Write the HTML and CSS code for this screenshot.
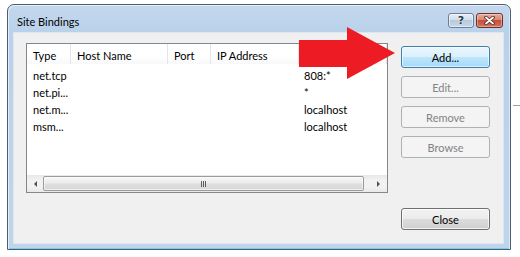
FILE: index.html
```html
<!DOCTYPE html>
<html lang="en">
<head>
    <meta charset="UTF-8">
    <title>Site Bindings</title>
    <link rel="stylesheet" href="styles.css">
</head>
<body>
    <div class="desk-line"></div>

    <div class="window">
        <div class="titlebar">
            <span class="title">Site Bindings</span>
            <div class="caption-buttons">
                <span class="cap-btn help">?</span>
                <span class="cap-btn close">
                    <svg width="11" height="9" viewBox="0 0 11 9">
                        <path d="M2 1.5 L9 7.5 M9 1.5 L2 7.5" stroke="#5a2a22" stroke-width="3.6" stroke-linecap="round"/>
                        <path d="M2 1.5 L9 7.5 M9 1.5 L2 7.5" stroke="#fff" stroke-width="1.8" stroke-linecap="round"/>
                    </svg>
                </span>
            </div>
        </div>

        <div class="client">
            <div class="listview">
                <div class="lv-header">
                    <span class="col c1">Type</span>
                    <span class="col c2">Host Name</span>
                    <span class="col c3">Port</span>
                    <span class="col c4">IP Address</span>
                    <span class="col c5">Binding...</span>
                </div>
                <div class="lv-body">
                    <div class="row">
                        <span class="col c1">net.tcp</span><span class="col c2"></span><span class="col c3"></span><span class="col c4"></span><span class="col c5">808:*</span>
                    </div>
                    <div class="row">
                        <span class="col c1">net.pi...</span><span class="col c2"></span><span class="col c3"></span><span class="col c4"></span><span class="col c5">*</span>
                    </div>
                    <div class="row">
                        <span class="col c1">net.m...</span><span class="col c2"></span><span class="col c3"></span><span class="col c4"></span><span class="col c5">localhost</span>
                    </div>
                    <div class="row">
                        <span class="col c1">msm...</span><span class="col c2"></span><span class="col c3"></span><span class="col c4"></span><span class="col c5">localhost</span>
                    </div>
                </div>
                <div class="hscroll">
                    <span class="sb-arrow left"><i></i></span>
                    <span class="sb-thumb"><i class="grip"></i></span>
                    <span class="sb-track"></span>
                    <span class="sb-arrow right"><i></i></span>
                </div>
            </div>

            <div class="actions">
                <button class="btn default">Add...</button>
                <button class="btn" disabled>Edit...</button>
                <button class="btn" disabled>Remove</button>
                <button class="btn" disabled>Browse</button>
                <button class="btn close-btn">Close</button>
            </div>
        </div>
    </div>

    <!-- red callout arrow pointing at Add -->
    <svg class="callout" width="100" height="56" viewBox="0 0 100 56">
        <polygon points="0,13 48,13 48,0 96,26 48,52 48,40 0,40" fill="#ed1c24"/>
    </svg>
</body>
</html>
```

FILE: styles.css
```css
body {
    margin: 0;
    width: 520px;
    height: 257px;
    background-color: #fff;
    position: relative;
    overflow: hidden;
    font-family: Lato, "Noto Sans", sans-serif;
    font-size: 11px;
    color: #000;
}

.desk-line {
    position: absolute;
    left: 513px;
    top: 105px;
    width: 7px;
    height: 1px;
    background-color: #a0a0a0;
}

/* dialog window */
.window {
    position: absolute;
    left: 7px;
    top: 4px;
    width: 504px;
    height: 246px;
    box-sizing: border-box;
    border: 1px solid #4f5d6f;
    border-radius: 7px 7px 0 0;
    background: linear-gradient(#c4d8ee, #b9d1ea 28px, #bfd5ec);
    box-shadow: inset 1px 1px 0 #e4eef8, inset -1px 0 0 #dbe7f4, inset 0 -1px 0 #6fd0f2;
    display: flex;
    flex-direction: column;
}

.titlebar {
    height: 27px;
    display: flex;
    align-items: flex-start;
    padding: 0 7px 0 9px;
}

.title {
    flex: 1;
    margin-top: 9px;
    line-height: 15px;
    color: #000;
}

.caption-buttons {
    display: flex;
    gap: 2px;
    margin-top: 8px;
}

.cap-btn {
    height: 15px;
    box-sizing: border-box;
    border-radius: 3px;
    display: flex;
    align-items: center;
    justify-content: center;
}

.cap-btn.help {
    width: 26px;
    border: 1px solid #6f8096;
    background: linear-gradient(#e6eef7, #d0dcea 50%, #b7cadf 50%, #c8d8ea);
    box-shadow: inset 0 0 0 1px rgba(255, 255, 255, 0.5);
    font-family: "DejaVu Sans", sans-serif;
    font-weight: bold;
    font-size: 11px;
    color: #27374a;
    text-shadow: 0 0 1px #fff, 0 0 1px #fff;
}

.cap-btn.close {
    width: 27px;
    border: 1px solid #6b3228;
    background: linear-gradient(#e9ab98, #d8836e 50%, #c44f3b 50%, #d3735d);
    box-shadow: inset 0 0 0 1px rgba(255, 255, 255, 0.35);
}

/* client area */
.client {
    flex: 1;
    margin: 0 6px 5px 5px;
    border: 1px solid #dde7f2;
    background-color: #f0f0f0;
    display: flex;
    align-items: flex-start;
    gap: 13px;
    padding: 10px 12px 0 12px;
}

.listview {
    width: 362px;
    height: 150px;
    box-sizing: border-box;
    border: 1px solid #828790;
    background-color: #fff;
    display: flex;
    flex-direction: column;
}

.lv-header {
    display: flex;
    height: 20px;
    background: linear-gradient(#fff, #fff 60%, #f7f8f9);
}

.lv-header .col {
    padding-top: 3px;
    line-height: 17px;
    border-right: 1px solid #e3e5e8;
}

.col {
    box-sizing: border-box;
    padding-left: 6px;
    white-space: nowrap;
}

.c1 { width: 44px; }
.c2 { width: 97px; }
.c3 { width: 43px; }
.c4 { width: 88px; }
.c5 { flex: 1; padding-left: 5px; }

.lv-body {
    flex: 1;
    padding-top: 3px;
}

.row {
    display: flex;
    height: 17px;
    line-height: 17px;
}

/* horizontal scrollbar */
.hscroll {
    height: 17px;
    display: flex;
    background: linear-gradient(#e8e8e8, #f2f2f2 30%, #f2f2f2 70%, #e9e9e9);
}

.sb-arrow {
    width: 16px;
    display: flex;
    align-items: center;
    justify-content: center;
}

.sb-arrow.right {
    width: 17px;
}

.sb-arrow i {
    width: 0;
    height: 0;
    border-top: 3px solid transparent;
    border-bottom: 3px solid transparent;
}

.sb-arrow.left i {
    border-right: 3px solid #505050;
}

.sb-arrow.right i {
    border-left: 3px solid #505050;
}

.sb-thumb {
    width: 321px;
    height: 15px;
    margin-top: 1px;
    box-sizing: border-box;
    border: 1px solid #9b9b9b;
    border-radius: 2px;
    background: linear-gradient(#f6f6f6, #ececec 45%, #dedede 55%, #d6d6d6);
    box-shadow: inset 0 0 0 1px rgba(255, 255, 255, 0.6);
    display: flex;
    align-items: center;
    justify-content: center;
}

.grip {
    width: 6px;
    height: 6px;
    background: repeating-linear-gradient(90deg, #5a5a5a 0 1px, transparent 1px 2px);
}

.sb-track {
    flex: 1;
}

/* buttons */
.actions {
    width: 89px;
    height: 184px;
    margin-top: 3px;
    display: flex;
    flex-direction: column;
    gap: 8px;
}

.btn {
    height: 22px;
    box-sizing: border-box;
    padding: 0;
    border: 1px solid #707070;
    border-radius: 3px;
    font-family: Lato, "Noto Sans", sans-serif;
    font-size: 11px;
    line-height: 19px;
    color: #000;
    background: linear-gradient(#f2f2f2, #ebebeb 50%, #dddddd 50%, #cfcfcf);
    box-shadow: inset 0 0 0 1px rgba(255, 255, 255, 0.7);
}

.btn.default {
    border-color: #3c7fb1;
    background: linear-gradient(#eaf6fd, #d9f0fc 50%, #bee6fd 50%, #a7d9f5);
    box-shadow: inset 0 0 0 1px rgba(255, 255, 255, 0.6);
}

.btn:disabled {
    border-color: #adb2b5;
    background: #f4f4f4;
    color: #838383;
    box-shadow: none;
}

.close-btn {
    margin-top: auto;
}

/* callout overlay */
.callout {
    position: absolute;
    left: 299px;
    top: 27px;
}
```
